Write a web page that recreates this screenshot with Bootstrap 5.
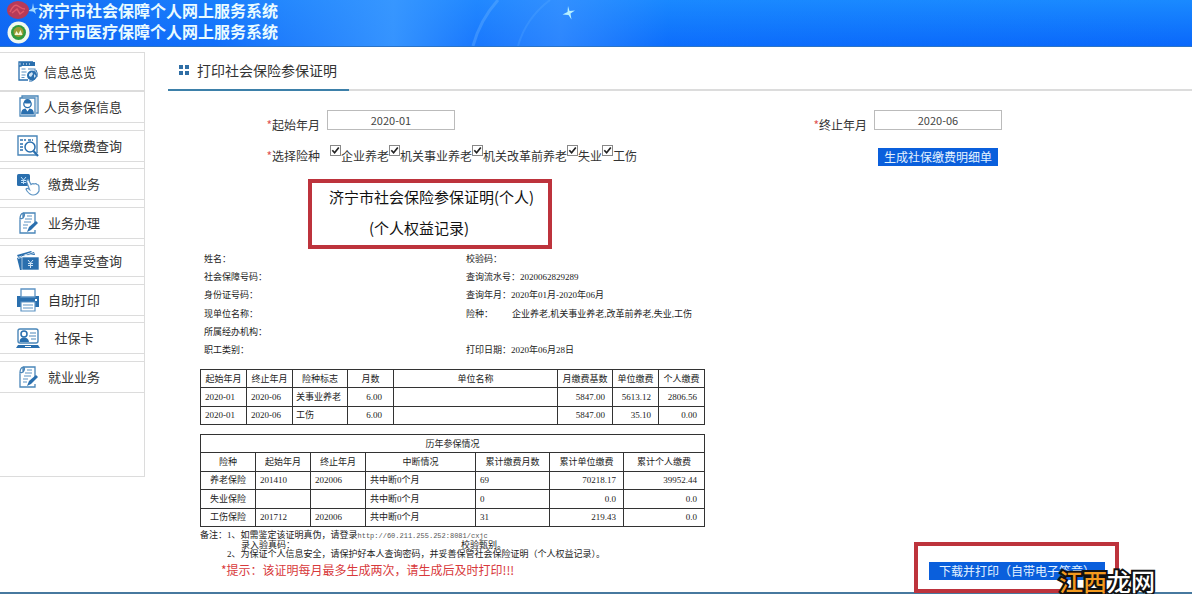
<!DOCTYPE html>
<html lang="zh-CN">
<head>
<meta charset="utf-8">
<meta name="viewport" content="width=device-width, initial-scale=1">
<title>济宁市社会保障个人网上服务系统</title>
<link href="https://cdn.jsdelivr.net/npm/bootstrap@5.3.0/dist/css/bootstrap.min.css" rel="stylesheet">
<style>
:root{--line:#dcdcdc;--ink:#333;--blue:#2a6fae;--mark:#bd333c}
body{font-family:"Liberation Sans","Noto Sans CJK SC",sans-serif;font-size:12px;line-height:20px;color:var(--ink);background:#fff}
.site-head{height:47px;overflow:hidden;border-bottom:1px solid #2b74c6;color:#e9fbff;
  background:linear-gradient(90deg,rgba(16,100,240,.75) 0,rgba(24,116,250,.5) 18%,rgba(58,152,255,.9) 33%,rgba(40,134,255,.5) 40%,rgba(60,146,255,.7) 47%,rgba(24,130,255,.2) 56%,rgba(0,100,255,0) 100%),linear-gradient(180deg,#1a8aff,#0a68fb)}
.site-head .sky{left:0;top:0;width:760px;height:47px}
.site-title{font-family:"Noto Sans CJK SC",sans-serif;font-size:16px;line-height:21px;font-weight:700;padding:0 0 0 38px}
.side{width:145px;min-height:425px;border:1px solid var(--line);border-left:0;margin-top:5px}
.side a{display:flex;align-items:center;color:var(--ink);text-decoration:none;height:32px;padding-left:16px;font-family:"Noto Sans CJK SC",sans-serif;font-size:13px;border:solid var(--line);border-width:1px 0;white-space:nowrap}
.side a.first-link{height:38px;border-width:0 0 1px}
.side a span{min-width:60px;margin-left:4px;text-align:center}
.side a.first-link span{text-align:left}
.side .rest{height:302px}
.side svg{width:24px;height:24px;flex:none}
.work{margin:5px 0 0 23px;min-width:0}
.work-title{height:39px;border-bottom:2px solid var(--line)}
.work-title h1{width:181px;height:39px;margin:0;padding:0 0 2px 11px;border-bottom:2px solid #3d80a9;font:400 14px/20px "Noto Sans CJK SC",sans-serif}
.query{display:grid;grid-template-columns:152px minmax(0,1fr) 160px 325px;padding-top:19px;row-gap:5px;grid-auto-rows:30px;font-family:"Noto Sans CJK SC",sans-serif}
.query>label,.query>.lbl{text-align:right;padding-top:5px}
.query .lbl{padding-top:1px}
.query i{color:#e05555;font-style:normal}
.query .month{width:128px;height:20px;min-height:0;margin-left:7px;padding:0;border:1px solid #bbb;border-radius:0;text-align:center;font-size:11px;color:#444}
.kinds{padding-left:10px}
.kinds input{appearance:none;width:11px;height:11px;margin:0;border:1px solid #888;background:#fff url("data:image/svg+xml,%3Csvg xmlns='http://www.w3.org/2000/svg' viewBox='0 0 9 9'%3E%3Cpath d='M1.3 4.2 3.6 6.8 7.8 1.5' fill='none' stroke='%23222' stroke-width='1.7'/%3E%3C/svg%3E")}
.kinds label{padding-top:1px}
.go{--bs-btn-bg:#0a5fdc;--bs-btn-border-color:#0a5fdc;--bs-btn-padding-x:0;--bs-btn-padding-y:0;--bs-btn-font-size:12px;--bs-btn-line-height:14px;--bs-btn-border-radius:0;font-family:"Noto Sans CJK SC",sans-serif;height:18px;color:#e3f2ff}
.go-list{width:120px;margin:3px 0 0 11px}
.go-print{width:176px}
.marked{border:4px solid var(--mark)}
.cert-name{width:244px;height:70px;margin:4px 0 0 140px;padding:0 0 0 17px;color:#111;font:400 15px/31px "Noto Sans CJK SC",sans-serif;white-space:nowrap}
.cert-name p{margin:0}
.cert-name p:first-child{margin-top:-2px}
.cert-name p+p{padding-left:40px}
.paper{width:505px;margin-left:32px;font:9px/17px "Liberation Serif","Noto Sans CJK SC",serif;color:#222;white-space:nowrap}
.facts{display:grid;grid-template-columns:262px 1fr;grid-template-rows:repeat(6,1fr);height:111px;padding:1px 0 0 4px;align-items:center}
.facts .gap-label{display:inline-block;width:46px}
.sheet{table-layout:fixed;border-collapse:collapse;width:505px;color:#222;margin:9px 0 0}
.sheet th,.sheet td{border:1px solid #333;padding:0 4px;font-weight:400;line-height:14px;vertical-align:middle;overflow:hidden}
.sheet th{text-align:center}
.sheet.pay td:nth-child(3){padding-left:3px;padding-right:0}
.sheet.pay td:nth-child(4){padding-right:11px}
.sheet .num{text-align:right;padding-right:7px}
.pay{height:56px}.years{height:93px}
.w46{width:46px}.w55{width:55px}.w74{width:74px}.w110{width:110px}
.notes{font:9px/9px "Liberation Serif","Noto Sans CJK SC",serif;color:#222;white-space:nowrap;margin:4px 0 0 32px}
.notes p{margin:0}
.notes .url{font:7px/9px "Liberation Mono",monospace;color:#555}
.notes .sub{padding-left:27px}
.notes .sub2{padding-left:41px}
.notes .verify{margin-left:166px}
.notes .tip{font:12px/20px "Noto Sans CJK SC",sans-serif;color:#d8393b;padding:1px 0 0 21px}
.print-box{width:205px;height:51px;margin:15px 73px -1px 0;padding:16px 0 0 11px}
.stamp{left:141px;top:20px;font:500 24px/30px "Noto Sans CJK SC",sans-serif;white-space:nowrap;color:#fff;-webkit-text-stroke:4px #111;paint-order:stroke fill}
.stamp span{color:#f39a1e}
.frame{border-bottom:2px solid #47799f}
</style>
</head>
<body>
<svg width="0" height="0" class="position-absolute" aria-hidden="true">
<symbol id="i-form" viewBox="0 0 24 24"><path d="M5 2h14v4H5z" fill="#2a6fae"/><path d="M5 2v4H3V2h14M3 6v14h9" fill="none" stroke="#2a6fae" stroke-width="1.3"/><path d="M7 4h1M10 4h1M13 4h1" stroke="#fff"/><path d="M5.500 9h4M5.500 12h5M5.500 15h4M5.500 17.500h3M12 9h7v3" fill="none" stroke="#5a8fc0" stroke-width="1.200"/><circle cx="16" cy="15.500" r="5" fill="#2a6fae"/><path d="M13 14l3-2 1 2-2 3-2-1zM18 14l2 2-2 2z" fill="#cfe4f6"/><path d="M19 19q-3 3-6 2M20 10q2 3 1 7" fill="none" stroke="#2a6fae"/></symbol>
<symbol id="i-person" viewBox="0 0 24 24"><path d="M6 3V1h16v17h-2M4 3h15v18H4z" fill="#fff" stroke="#4a86b9" stroke-width="1.300"/><path d="M20 2v17" stroke="#8db4d4"/><circle cx="11.500" cy="9" r="3.700" fill="#fff" stroke="#2a6fae" stroke-width="1.300"/><path d="M8 8q0-4 3.500-4T15 8q-3 1-7 0zM5 19.500q0-6 4.500-6l2 3 2-3q4.500 0 4.500 6z" fill="#2a6fae"/></symbol>
<symbol id="i-search" viewBox="0 0 24 24"><path d="M20 21H2V2h19v17" fill="none" stroke="#4a86b9" stroke-width="1.400"/><path d="M4 6h6M12 6h5M4 10h4M4 13h3M4 16h4" stroke="#2a6fae" stroke-width="1.300" stroke-dasharray="3 1"/><circle cx="14" cy="13" r="5" fill="#fff" stroke="#2a6fae" stroke-width="1.500"/><path d="M17.500 17l4.500 5" stroke="#2a6fae" stroke-width="2.200"/></symbol>
<symbol id="i-pay" viewBox="0 0 24 24"><rect x="1" y="2" width="13" height="12" rx="1.500" fill="#2a6fae"/><path d="M5 5l2.500 3L10 5M7.500 8v4M5 8.500h5M5 10.500h5" fill="none" stroke="#bfe0fa"/><path d="M11 8q1.500-1 2 .5l2 4q2-1.500 3-.5 2-1 3 .5 2 0 2 2.500v4q-2 4-6 4-3 0-6-4l-1-2q1-1.500 3.500.5L10.500 9.500z" fill="#fff" stroke="#5c93c3" stroke-width="1.200"/></symbol>
<symbol id="i-doc" viewBox="0 0 24 24"><path d="M7 2h12v10M4 8v14h15v-3M7 2q-3 1-3 6l3-1zq3 1 0 5" fill="none" stroke="#4a86b9" stroke-width="1.300"/><path d="M11 5h5M9 8h7M8 11h7M7 14h5M7 17h4" stroke="#5c93c3" stroke-width="1.100"/><path d="M11 21l2-5 7-6 2 2-7 7z" fill="#2a6fae"/></symbol>
<symbol id="i-cash" viewBox="0 0 24 24"><path d="M1 9l17-6 1 3H6v15H4z" fill="#2a6fae"/><path d="M1 6l14-4 1 1-14 5z" fill="#2a6fae"/><path d="M2 9.500l16-5" stroke="#dcebf8" stroke-width=".8"/><path d="M6 8h17v13H6z" fill="#2a6fae" stroke="#fff" stroke-width=".6"/><path d="M12 11l2.500 3 2.500-3M14.500 14v5M12 14.500h5M12 16.500h5" fill="none" stroke="#cfe4f6"/></symbol>
<symbol id="i-printer" viewBox="0 0 24 24"><path d="M1 8h22v11H1z" fill="#2a6fae"/><path d="M5 1h14v8H5z" fill="#fff" stroke="#5c93c3" stroke-width="1.300"/><path d="M19 11h2v2h-2z" fill="#fff"/><path d="M5 14h14v9H5z" fill="#fff" stroke="#5c93c3" stroke-width="1.200"/><path d="M7 17h10M7 20h10" stroke="#5c93c3" stroke-width="1.200"/></symbol>
<symbol id="i-card" viewBox="0 0 24 24"><rect x="2" y="3" width="20" height="14" rx="2" fill="#fff" stroke="#4a86b9" stroke-width="1.400"/><circle cx="8" cy="8" r="3" fill="#fff" stroke="#2a6fae" stroke-width="1.500"/><path d="M3.500 16q0-4.500 4.500-4.500t5 4.500zM2 19h20l2 3H0z" fill="#2a6fae"/><path d="M14 7h6M13 10h7M15 13h5" stroke="#4a86b9" stroke-width="1.200"/><path d="M9 20.500h6" stroke="#fff"/></symbol>
</svg>

<header class="site-head position-relative">
  <svg class="sky position-absolute" viewBox="0 0 760 47" aria-hidden="true">
    <path d="M498 0Q480 20 473 46" fill="none" stroke="#6fb8ff" stroke-width="3" opacity=".35"/>
    <path d="M550 0Q526 18 518 46" fill="none" stroke="#6fb8ff" stroke-width="2" opacity=".2"/>
    <path d="M568 6l1.500 5 5.500-.5-4.500 3 1 6-3-4.500-6-.5 5-2.500z" fill="#b8f0ff"/>
    <path d="M33 3l1 5 5 0-4 2 1 4-3-2.500-5-.5 4-2.500z" fill="#9fd8ff"/>
    <ellipse cx="18" cy="10" rx="11" ry="9" fill="#b73a58"/>
    <path d="M10 12q4-9 8-6t7 3M12 13l5-4 3 5 4-3" fill="none" stroke="#e05a6a" stroke-width="1.500"/>
    <circle cx="18.500" cy="32.500" r="11" fill="#f1f8ee"/><circle cx="18.500" cy="32.500" r="7.500" fill="#2f9a3e"/><circle cx="18.500" cy="32" r="5" fill="#9b9a35"/>
    <path d="M14.500 35l2-4 2 3 2-4 2 5z" fill="#f4f7d5"/>
  </svg>
  <div class="site-title position-relative"><div>济宁市社会保障个人网上服务系统</div><div>济宁市医疗保障个人网上服务系统</div></div>
</header>

<div class="frame d-flex">
  <nav class="side flex-shrink-0 align-self-start" aria-label="主菜单">
    <a href="#" class="first-link"><svg><use href="#i-form"/></svg><span>信息总览</span></a>
    <div class="rest d-flex flex-column justify-content-between">
      <a href="#"><svg><use href="#i-person"/></svg><span>人员参保信息</span></a>
      <a href="#"><svg><use href="#i-search"/></svg><span>社保缴费查询</span></a>
      <a href="#"><svg><use href="#i-pay"/></svg><span>缴费业务</span></a>
      <a href="#"><svg><use href="#i-doc"/></svg><span>业务办理</span></a>
      <a href="#"><svg><use href="#i-cash"/></svg><span>待遇享受查询</span></a>
      <a href="#"><svg><use href="#i-printer"/></svg><span>自助打印</span></a>
      <a href="#"><svg><use href="#i-card"/></svg><span>社保卡</span></a>
      <a href="#"><svg><use href="#i-doc"/></svg><span>就业业务</span></a>
    </div>
  </nav>

  <main class="work flex-grow-1">
    <div class="work-title">
      <h1 class="d-flex align-items-center"><svg width="10" height="10" class="me-2" aria-hidden="true"><path d="M0 0h4v4H0zM6 0h4v4H6zM0 6h4v4H0zM6 6h4v4H6z" fill="#2f6ea5"/></svg><span>打印社会保险参保证明</span></h1>
    </div>
    <form class="query">
      <label for="from"><i>*</i>起始年月</label>
      <div><input id="from" class="form-control month" value="2020-01"></div>
      <label for="to"><i>*</i>终止年月</label>
      <div><input id="to" class="form-control month" value="2020-06"></div>
      <div class="lbl"><i>*</i>选择险种</div>
      <div class="kinds d-flex align-items-start text-nowrap">
        <input type="checkbox" id="k1" checked><label for="k1">企业养老</label>
        <input type="checkbox" id="k2" checked><label for="k2">机关事业养老</label>
        <input type="checkbox" id="k3" checked><label for="k3">机关改革前养老</label>
        <input type="checkbox" id="k4" checked><label for="k4">失业</label>
        <input type="checkbox" id="k5" checked><label for="k5">工伤</label>
      </div>
      <div></div>
      <div><button type="button" class="btn btn-primary go go-list d-block">生成社保缴费明细单</button></div>
    </form>

    <div class="cert-name marked"><p>济宁市社会保险参保证明(个人)</p><p>(个人权益记录)</p></div>

    <section class="paper">
      <div class="facts">
        <div>姓名：</div><div>校验码：</div>
        <div>社会保障号码：</div><div>查询流水号：2020062829289</div>
        <div>身份证号码：</div><div>查询年月：2020年01月-2020年06月</div>
        <div>现单位名称：</div><div><span class="gap-label">险种：</span>企业养老,机关事业养老,改革前养老,失业,工伤</div>
        <div>所属经办机构：</div><div></div>
        <div>职工类别：</div><div>打印日期：2020年06月28日</div>
      </div>
      <table class="sheet pay">
        <colgroup><col class="w46"><col class="w46"><col class="w55"><col class="w46"><col><col class="w55"><col class="w46"><col class="w46"></colgroup>
        <tr><th>起始年月</th><th>终止年月</th><th>险种标志</th><th>月数</th><th>单位名称</th><th>月缴费基数</th><th>单位缴费</th><th>个人缴费</th></tr>
        <tr><td>2020-01</td><td>2020-06</td><td>关事业养老</td><td class="num">6.00</td><td></td><td class="num">5847.00</td><td class="num">5613.12</td><td class="num">2806.56</td></tr>
        <tr><td>2020-01</td><td>2020-06</td><td>工伤</td><td class="num">6.00</td><td></td><td class="num">5847.00</td><td class="num">35.10</td><td class="num">0.00</td></tr>
      </table>
      <table class="sheet years">
        <colgroup><col class="w55"><col class="w55"><col class="w55"><col class="w110"><col class="w74"><col class="w74"><col></colgroup>
        <tr><th colspan="7">历年参保情况</th></tr>
        <tr><th>险种</th><th>起始年月</th><th>终止年月</th><th>中断情况</th><th>累计缴费月数</th><th>累计单位缴费</th><th>累计个人缴费</th></tr>
        <tr><th>养老保险</th><td>201410</td><td>202006</td><td>共中断0个月</td><td>69</td><td class="num">70218.17</td><td class="num">39952.44</td></tr>
        <tr><th>失业保险</th><td></td><td></td><td>共中断0个月</td><td>0</td><td class="num">0.0</td><td class="num">0.0</td></tr>
        <tr><th>工伤保险</th><td>201712</td><td>202006</td><td>共中断0个月</td><td>31</td><td class="num">219.43</td><td class="num">0.0</td></tr>
      </table>
    </section>

    <div class="d-flex justify-content-between">
      <div class="notes">
        <p>备注：1、如需鉴定该证明真伪，请登录<span class="url">http://60.211.255.252:8081/cxjc</span></p>
        <p class="sub2">录入验真码：<span class="verify">校验甄别。</span></p>
        <p class="sub">2、为保证个人信息安全，请保护好本人查询密码，并妥善保管社会保险证明（个人权益记录）。</p>
        <p class="tip">*提示：该证明每月最多生成两次，请生成后及时打印!!!</p>
      </div>
      <div class="print-box marked position-relative align-self-end flex-shrink-0">
        <button type="button" class="btn btn-primary go go-print d-block">下载并打印（自带电子签章）</button>
        <div class="stamp position-absolute"><span>江西</span>龙网</div>
      </div>
    </div>
  </main>
</div>
<script src="https://cdn.jsdelivr.net/npm/bootstrap@5.3.0/dist/js/bootstrap.bundle.min.js"></script>
</body>
</html>
